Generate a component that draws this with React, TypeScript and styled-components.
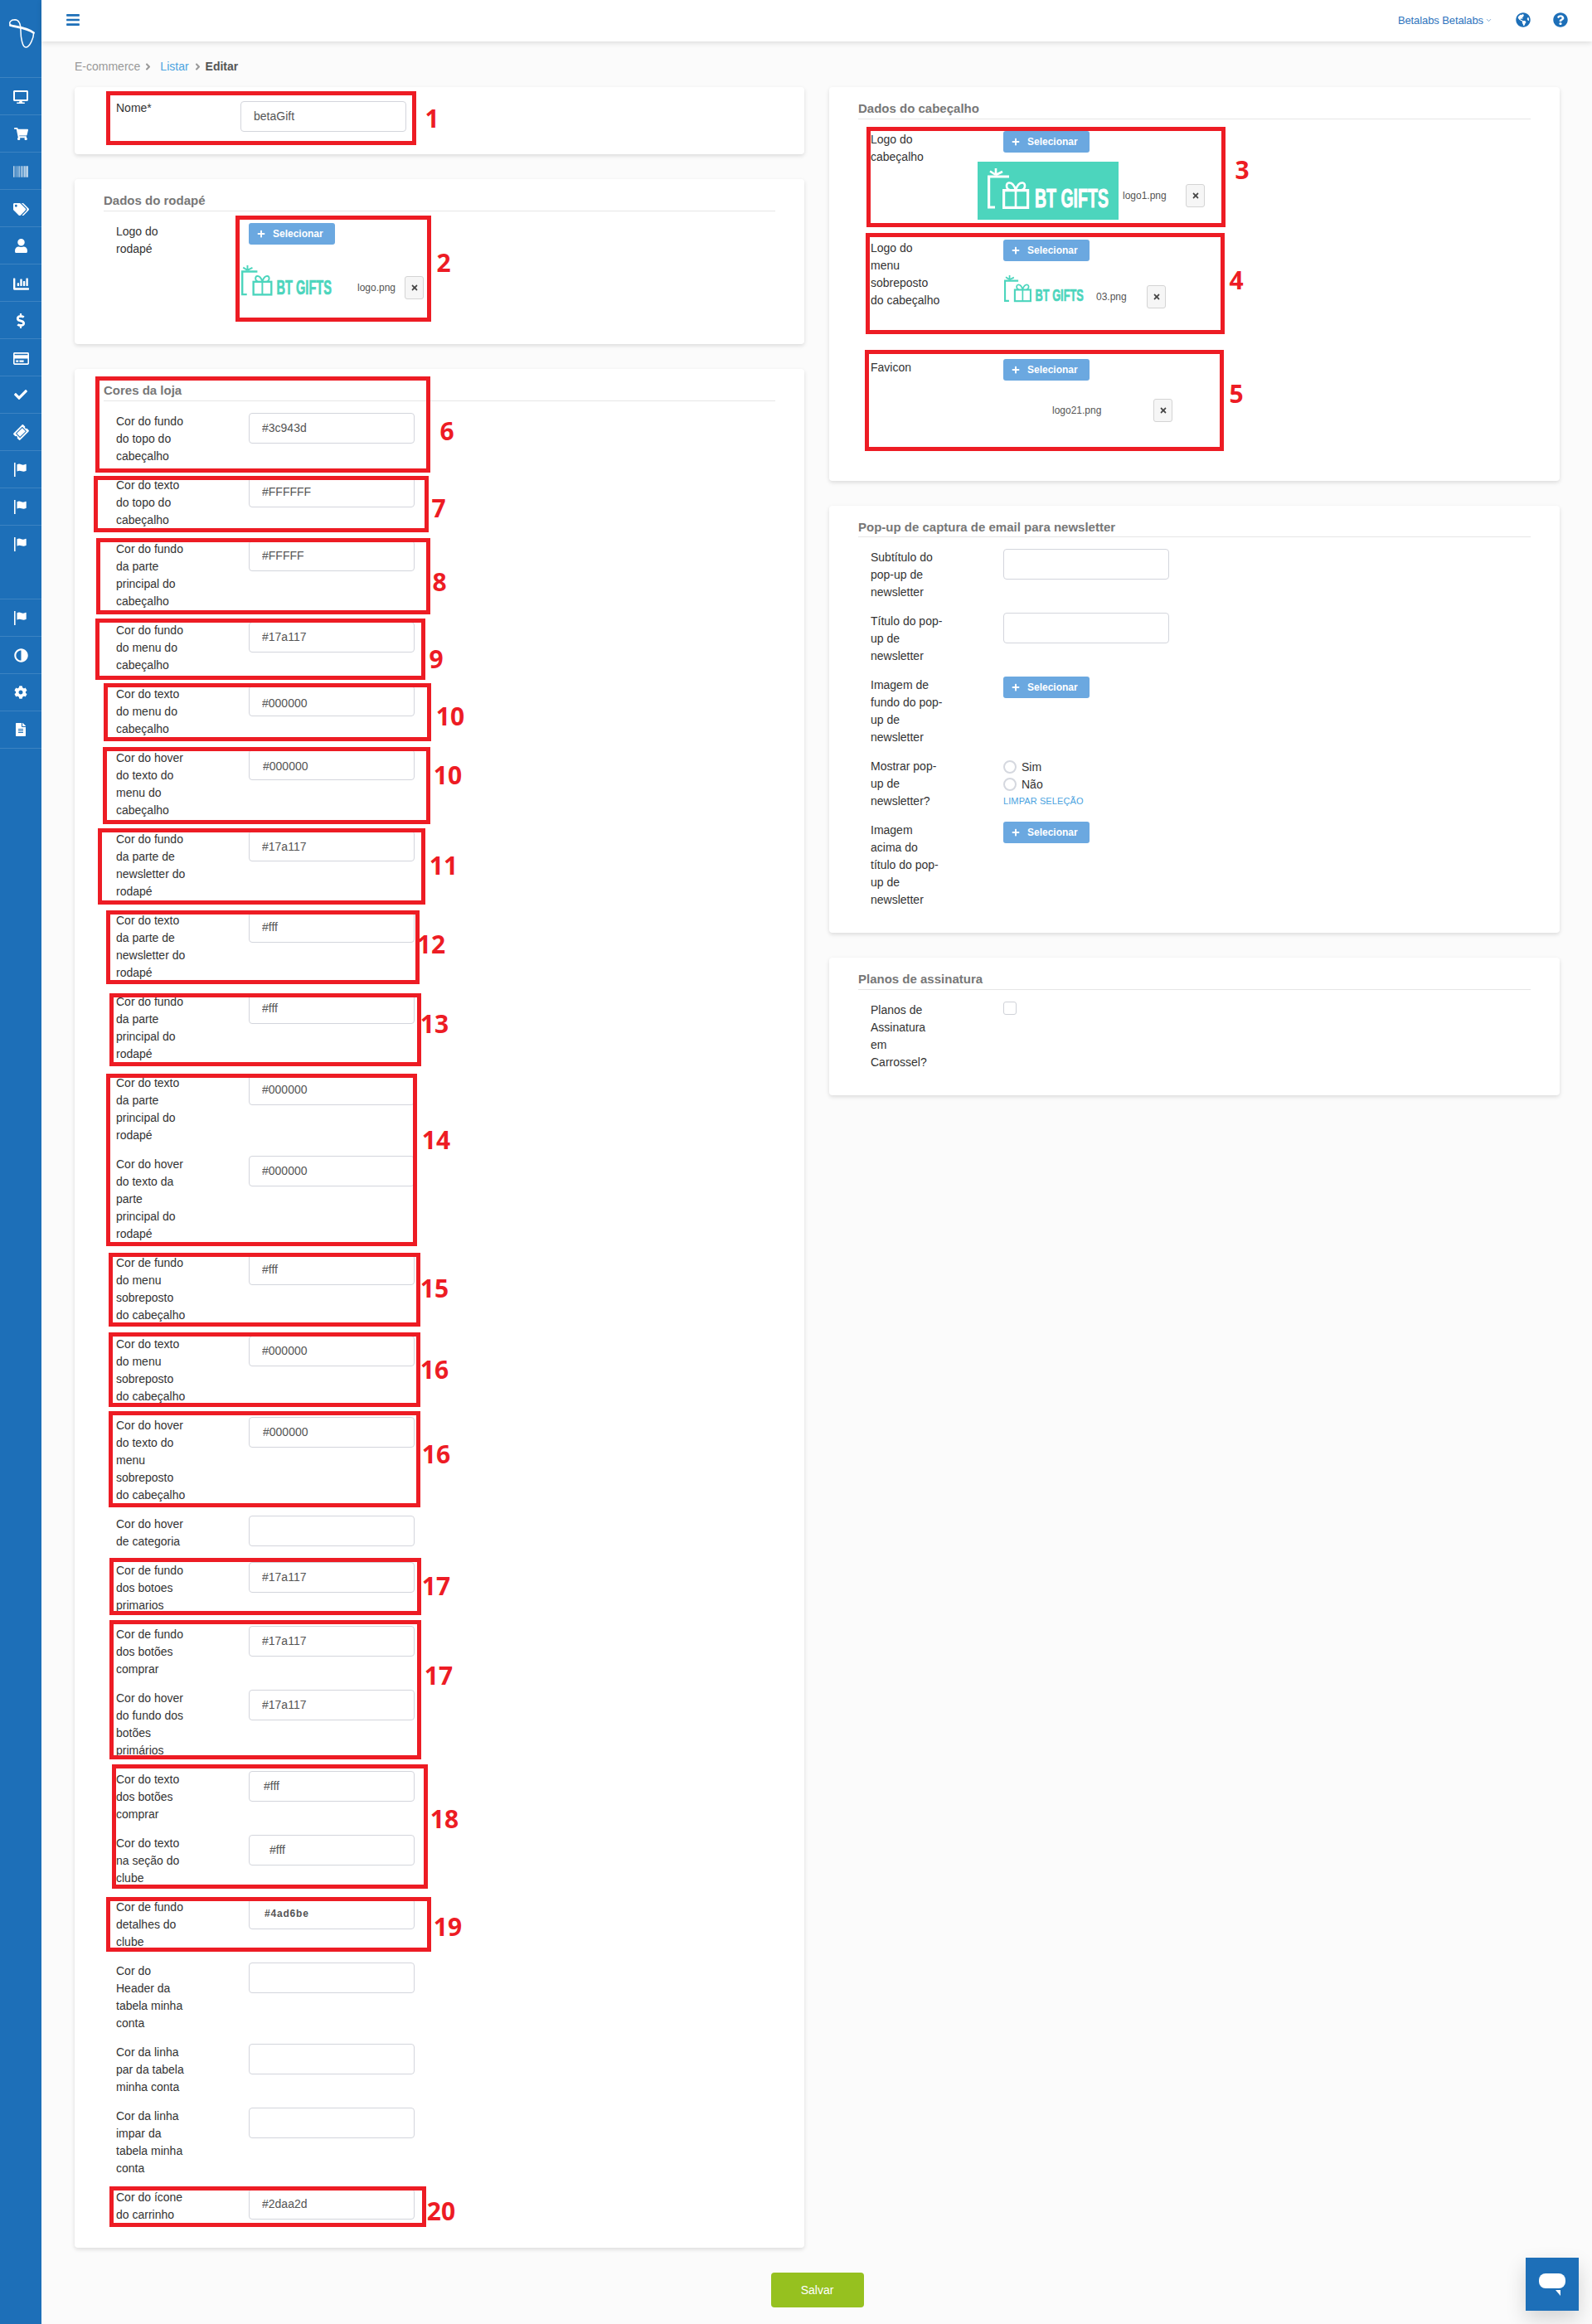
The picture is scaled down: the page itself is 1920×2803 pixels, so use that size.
import React from 'react';
import styled, { createGlobalStyle } from 'styled-components';
import {
  FaDesktop, FaShoppingCart, FaBarcode, FaTags, FaUser, FaChartBar, FaDollarSign,
  FaRegCreditCard, FaCheck, FaTicketAlt, FaAdjust, FaCog, FaFileAlt, FaBars,
  FaGlobeAmericas, FaQuestionCircle, FaPlus, FaTimes, FaAngleRight,
} from 'react-icons/fa';
import { ChevronDown } from 'lucide-react';

const BLUE = '#1d6fb8';

const Global = createGlobalStyle`
  html, body { margin: 0; padding: 0; background: #fbfbfb; }
  body { font-family: "Liberation Sans", Arial, sans-serif; font-size: 14px; color: #333; }
  * { box-sizing: border-box; }
`;

const Page = styled.div`
  position: relative;
  display: flex;
  width: 1920px;
  min-height: 2803px;
  overflow: hidden;
`;

const Sidebar = styled.aside`
  width: 50px;
  flex: none;
  background: ${BLUE};
  color: #fff;
`;

const SideLogo = styled.div`
  height: 94px;
  padding: 23px 0 0 10px;
  border-bottom: 1px solid rgba(255, 255, 255, 0.14);
  svg { display: block; }
`;

const SideItem = styled.div<{ $tall?: boolean }>`
  height: ${(p) => (p.$tall ? 89 : 45)}px;
  padding-top: 14px;
  display: flex;
  justify-content: center;
  align-items: flex-start;
  border-bottom: 1px solid rgba(255, 255, 255, 0.14);
  svg { display: block; }
`;

const FlippedAdjust = styled(FaAdjust)`
  transform: scaleX(-1);
`;

const TiltedTicket = styled(FaTicketAlt)`
  transform: rotate(-45deg);
`;

const Main = styled.div`
  flex: 1;
  min-width: 0;
  display: flex;
  flex-direction: column;
`;

const Topbar = styled.header`
  height: 50px;
  background: #fff;
  box-shadow: 0 2px 6px rgba(0, 0, 0, 0.12);
  display: flex;
  align-items: center;
  padding: 0 29px 2px 29px;
  color: ${BLUE};
`;

const UserMenu = styled.div`
  margin-left: auto;
  display: flex;
  align-items: center;
  font-size: 13px;
  color: #2f74bd;
  letter-spacing: -0.1px;
  svg { margin-left: 2px; color: #5b8fc7; }
`;

const TopIcon = styled.span<{ $gap: number }>`
  display: flex;
  margin-left: ${(p) => p.$gap}px;
  color: ${BLUE};
`;

const Content = styled.main`
  padding: 20px 39px 20px 40px;
  display: flex;
  flex-direction: column;
`;

const Crumbs = styled.nav`
  height: 20px;
  margin-bottom: 15px;
  display: flex;
  align-items: center;
  font-size: 14px;
  line-height: 20px;
  color: #999;
`;

const CrumbSep = styled.span<{ $l: number; $r: number }>`
  display: flex;
  margin: 0 ${(p) => p.$r}px 0 ${(p) => p.$l}px;
  color: #999;
`;

const CrumbLink = styled.span`
  color: #4ba3e0;
`;

const CrumbCurrent = styled.b`
  color: #555;
`;

const Columns = styled.div`
  display: grid;
  grid-template-columns: 880px 881px;
  column-gap: 30px;
  align-items: start;
`;

const Column = styled.div`
  display: flex;
  flex-direction: column;
  gap: 30px;
`;

const Card = styled.section<{ $bare?: boolean }>`
  background: #fff;
  border-radius: 4px;
  box-shadow: 0 2px 5px rgba(0, 0, 0, 0.13);
  padding: ${(p) => (p.$bare ? '15px 35px 13px' : '0 35px 15px')};
`;

const CardTitle = styled.h3<{ $tight?: boolean }>`
  margin: 0 0 14px;
  padding: 17px 0 ${(p) => (p.$tight ? 2 : 3)}px;
  font-size: 15px;
  line-height: 18px;
  font-weight: bold;
  color: #777;
  border-bottom: 1px solid #e6e6e6;
`;

const Row = styled.div<{ $labelWidth?: number; $minHeight?: number }>`
  display: grid;
  grid-template-columns: ${(p) => p.$labelWidth ?? 160}px 1fr;
  padding-left: 15px;
  margin-bottom: 14px;
  min-height: ${(p) => p.$minHeight ?? 0}px;
`;

const Label = styled.label`
  font-size: 14px;
  line-height: 21px;
  color: #333;
  white-space: pre-line;
`;

const TextInput = styled.input<{ $pad?: number; $strong?: boolean; $drop?: number; $top?: number }>`
  display: block;
  width: 200px;
  height: 37px;
  margin-top: ${(p) => p.$top ?? 0}px;
  border: 1px solid #d3d5dc;
  border-radius: 4px;
  background: #fff;
  color: #555;
  outline: none;
  font-family: "Liberation Sans", Arial, sans-serif;
  font-size: ${(p) => (p.$strong ? 12 : 14)}px;
  font-weight: ${(p) => (p.$strong ? 'bold' : 'normal')};
  letter-spacing: ${(p) => (p.$strong ? 0.8 : 0)}px;
  padding: ${(p) => (p.$drop ?? 0) * 2}px 0 1px ${(p) => p.$pad ?? 15}px;
`;

const SelectButton = styled.button`
  width: 104px;
  height: 26px;
  border: none;
  border-radius: 3px;
  background: #6ba8e0;
  color: #fff;
  font-family: "Liberation Sans", Arial, sans-serif;
  font-size: 12px;
  font-weight: bold;
  display: flex;
  align-items: center;
  padding: 0 0 0 10px;
  svg { margin-right: 9px; }
`;

const Preview = styled.div<{ $top: number; $shift?: number }>`
  display: flex;
  align-items: center;
  height: 28px;
  margin-top: ${(p) => p.$top}px;
  margin-left: ${(p) => p.$shift ?? 0}px;
`;

const LogoSlot = styled.div<{ $w: number; $h: number; $lift: number; $bg?: string; $inset?: number }>`
  flex: none;
  width: ${(p) => p.$w}px;
  height: ${(p) => p.$h}px;
  margin-bottom: ${(p) => p.$lift}px;
  padding-top: ${(p) => p.$inset ?? 0}px;
  background: ${(p) => p.$bg ?? 'transparent'};
  display: flex;
  align-items: flex-start;
  justify-content: center;
  svg { display: block; overflow: visible; }
`;

const FileName = styled.span<{ $l: number; $w: number }>`
  flex: none;
  width: ${(p) => p.$w}px;
  margin-left: ${(p) => p.$l}px;
  font-size: 12px;
  color: #555;
  white-space: nowrap;
`;

const RemoveButton = styled.button<{ $l: number }>`
  flex: none;
  width: 23px;
  height: 28px;
  padding: 0;
  margin-left: ${(p) => p.$l}px;
  border: 1px solid #d4d4d4;
  border-radius: 3px;
  background: #f6f6f6;
  color: #444;
  display: flex;
  align-items: center;
  justify-content: center;
`;

const RadioLine = styled.div`
  display: flex;
  align-items: center;
  height: 21px;
  font-size: 14px;
  color: #333;
`;

const RadioDot = styled.span`
  width: 16px;
  height: 16px;
  margin-right: 6px;
  border: 2px solid #d5d8df;
  border-radius: 50%;
  background: #fff;
`;

const ClearLink = styled.div`
  font-size: 11px;
  line-height: 21px;
  color: #4ba3e0;
  letter-spacing: 0.1px;
`;

const CheckBox = styled.span`
  display: block;
  width: 16px;
  height: 16px;
  border: 1px solid #cfd2d8;
  border-radius: 3px;
  background: #fff;
`;

const Footer = styled.div`
  display: flex;
  justify-content: center;
  margin-top: 30px;
`;

const SaveButton = styled.button`
  width: 112px;
  height: 42px;
  border: none;
  border-radius: 4px;
  background: #96c11f;
  color: #fff;
  font-family: "Liberation Sans", Arial, sans-serif;
  font-size: 14px;
`;

const ChatButton = styled.div`
  position: absolute;
  left: 1840px;
  top: 2723px;
  width: 64px;
  height: 64px;
  background: ${BLUE};
  box-shadow: 0 10px 24px rgba(0, 0, 0, 0.16);
  display: flex;
  align-items: center;
  justify-content: center;
`;

const Mark = styled.div<{ $x: number; $y: number; $r: number; $b: number }>`
  position: absolute;
  left: ${(p) => p.$x}px;
  top: ${(p) => p.$y}px;
  width: ${(p) => p.$r - p.$x}px;
  height: ${(p) => p.$b - p.$y}px;
  border: 5px solid #ed1c24;
  pointer-events: none;
`;

const MarkNumber = styled.span<{ $x: number; $y: number }>`
  position: absolute;
  left: ${(p) => p.$x}px;
  top: ${(p) => p.$y}px;
  transform: translate(-50%, -50%);
  font-family: "Open Sans", sans-serif;
  font-weight: 700;
  font-size: 30px;
  line-height: 1;
  color: #ed1c24;
`;

const FlagIcon = () => (
  <svg width="16" height="17" viewBox="0 0 16 17" fill="#fff">
    <rect x="0" y="0" width="1.6" height="17" />
    <path d="M3.5 2.2c2-1 3.6-.7 5.2 0s2.9.6 5.3-.4c.6 0 .7.3.7.6v7.4c-2.3 1.2-4 1.2-5.7.5s-3.300-.8-5.500.3V2.200z" />
  </svg>
);

const SideBrand = () => (
  <svg width="32" height="36" viewBox="0 0 32 36" fill="none" stroke="#fff" strokeLinecap="round">
    <path d="M2.500 7.500C8 9.500 22 10 30.500 16.500" strokeWidth="2.800" />
    <path
      d="M3 8C0 4 3 .8 8 .8 13 1 15 6 15 14c0 8 2 20 6 20 5 0 10-12 9.500-17.500"
      strokeWidth="1.500"
    />
  </svg>
);

const BrandLogo = ({ color, width }: { color: string; width: number }) => (
  <svg width={width} viewBox="0 0 146 49" fill="none" stroke={color} strokeWidth="3.200">
    <path d="M1.600 8.500V47H9M1.600 10H26" />
    <path d="M10 8 3 3.500M10 8V0M10 8l8-4" strokeWidth="2.600" />
    <rect x="19.600" y="26.600" width="29" height="20.800" />
    <path d="M34 26v22M34 26c-2-6-5-9-8.500-8.500-4 .6-3 8.500 1.500 8.500M34 26c2-6 5-9 8.500-8.500 4 .6 3 8.500-1.500 8.500" strokeWidth="2.600" />
    <text
      transform="translate(57 47) scale(0.63 1)"
      fontFamily="'Liberation Sans', sans-serif"
      fontWeight="bold"
      fontSize="31"
      fill={color}
      stroke={color}
      strokeWidth="1"
    >
      BT GIFTS
    </text>
  </svg>
);

const sideIcons: React.ReactNode[] = [
  <FaDesktop size={18} />, <FaShoppingCart size={17} />, <FaBarcode size={18} />, <FaTags size={19} />,
  <FaUser size={17} />, <FaChartBar size={19} />, <FaDollarSign size={18} />, <FaRegCreditCard size={19} />,
  <FaCheck size={16} />, <TiltedTicket size={17} />,
  <FlagIcon />, <FlagIcon />,
];

const sideIconsAfter: React.ReactNode[] = [
  <FlagIcon />, <FlippedAdjust size={17} />, <FaCog size={16} />, <FaFileAlt size={16} />,
];

type Color = { label: string; value?: string; pad?: number; strong?: boolean; drop?: number };

const colors: Color[] = [
  { label: 'Cor do fundo\ndo topo do\ncabeçalho', value: '#3c943d' },
  { label: 'Cor do texto\ndo topo do\ncabeçalho', value: '#FFFFFF' },
  { label: 'Cor do fundo\nda parte\nprincipal do\ncabeçalho', value: '#FFFFF' },
  { label: 'Cor do fundo\ndo menu do\ncabeçalho', value: '#17a117' },
  { label: 'Cor do texto\ndo menu do\ncabeçalho', value: '#000000', drop: 3 },
  { label: 'Cor do hover\ndo texto do\nmenu do\ncabeçalho', value: '#000000', pad: 16, drop: 2 },
  { label: 'Cor do fundo\nda parte de\nnewsletter do\nrodapé', value: '#17a117', drop: 1 },
  { label: 'Cor do texto\nda parte de\nnewsletter do\nrodapé', value: '#fff' },
  { label: 'Cor do fundo\nda parte\nprincipal do\nrodapé', value: '#fff' },
  { label: 'Cor do texto\nda parte\nprincipal do\nrodapé', value: '#000000' },
  { label: 'Cor do hover\ndo texto da\nparte\nprincipal do\nrodapé', value: '#000000' },
  { label: 'Cor de fundo\ndo menu\nsobreposto\ndo cabeçalho', value: '#fff' },
  { label: 'Cor do texto\ndo menu\nsobreposto\ndo cabeçalho', value: '#000000' },
  { label: 'Cor do hover\ndo texto do\nmenu\nsobreposto\ndo cabeçalho', value: '#000000', pad: 16 },
  { label: 'Cor do hover\nde categoria' },
  { label: 'Cor de fundo\ndos botoes\nprimarios', value: '#17a117' },
  { label: 'Cor de fundo\ndos botões\ncomprar', value: '#17a117' },
  { label: 'Cor do hover\ndo fundo dos\nbotões\nprimários', value: '#17a117' },
  { label: 'Cor do texto\ndos botões\ncomprar', value: '#fff', pad: 17 },
  { label: 'Cor do texto\nna seção do\nclube', value: '#fff', pad: 24 },
  { label: 'Cor de fundo\ndetalhes do\nclube', value: '#4ad6be', pad: 18, strong: true },
  { label: 'Cor do\nHeader da\ntabela minha\nconta' },
  { label: 'Cor da linha\npar da tabela\nminha conta' },
  { label: 'Cor da linha\nimpar da\ntabela minha\nconta' },
  { label: 'Cor do ícone\ndo carrinho', value: '#2daa2d', pad: 15 },
];

const marks: { n: string; x: number; y: number; r: number; b: number; nx: number; ny: number }[] = [
  { n: '1', x: 128, y: 110, r: 502, b: 175, nx: 521, ny: 143 },
  { n: '2', x: 284, y: 260, r: 520, b: 388, nx: 535, ny: 317 },
  { n: '3', x: 1045, y: 153, r: 1478, b: 274, nx: 1498, ny: 205 },
  { n: '4', x: 1044, y: 281, r: 1477, b: 403, nx: 1491, ny: 338 },
  { n: '5', x: 1043, y: 422, r: 1476, b: 544, nx: 1491, ny: 475 },
  { n: '6', x: 115, y: 454, r: 519, b: 570, nx: 539, ny: 520 },
  { n: '7', x: 113, y: 574, r: 517, b: 642, nx: 529, ny: 613 },
  { n: '8', x: 116, y: 649, r: 519, b: 741, nx: 530, ny: 702 },
  { n: '9', x: 115, y: 746, r: 513, b: 820, nx: 526, ny: 795 },
  { n: '10', x: 125, y: 824, r: 520, b: 894, nx: 543, ny: 864 },
  { n: '10', x: 124, y: 901, r: 519, b: 994, nx: 540, ny: 935 },
  { n: '11', x: 118, y: 999, r: 513, b: 1091, nx: 535, ny: 1044 },
  { n: '12', x: 128, y: 1098, r: 506, b: 1187, nx: 520, ny: 1139 },
  { n: '13', x: 132, y: 1198, r: 508, b: 1286, nx: 524, ny: 1235 },
  { n: '14', x: 128, y: 1295, r: 503, b: 1503, nx: 526, ny: 1375 },
  { n: '15', x: 131, y: 1511, r: 507, b: 1600, nx: 524, ny: 1554 },
  { n: '16', x: 131, y: 1607, r: 507, b: 1697, nx: 524, ny: 1652 },
  { n: '16', x: 131, y: 1702, r: 507, b: 1818, nx: 526, ny: 1754 },
  { n: '17', x: 132, y: 1879, r: 508, b: 1948, nx: 526, ny: 1913 },
  { n: '17', x: 132, y: 1954, r: 508, b: 2122, nx: 529, ny: 2021 },
  { n: '18', x: 135, y: 2128, r: 516, b: 2278, nx: 536, ny: 2194 },
  { n: '19', x: 128, y: 2288, r: 520, b: 2354, nx: 540, ny: 2324 },
  { n: '20', x: 132, y: 2637, r: 514, b: 2686, nx: 532, ny: 2667 },
];

const Select = () => (
  <SelectButton type="button">
    <FaPlus size={10} />
    Selecionar
  </SelectButton>
);

const Remove = ({ gap }: { gap: number }) => (
  <RemoveButton type="button" $l={gap}>
    <FaTimes size={10} />
  </RemoveButton>
);

export default function App() {
  return (
    <Page>
      <Global />
      <Sidebar>
        <SideLogo><SideBrand /></SideLogo>
        {sideIcons.map((icon, i) => <SideItem key={i}>{icon}</SideItem>)}
        <SideItem $tall><FlagIcon /></SideItem>
        {sideIconsAfter.map((icon, i) => <SideItem key={i}>{icon}</SideItem>)}
      </Sidebar>
      <Main>
        <Topbar>
          <FaBars size={18} />
          <UserMenu>
            Betalabs Betalabs
            <ChevronDown size={9} strokeWidth={2} />
          </UserMenu>
          <TopIcon $gap={28}><FaGlobeAmericas size={18} /></TopIcon>
          <TopIcon $gap={27}><FaQuestionCircle size={18} /></TopIcon>
        </Topbar>
        <Content>
          <Crumbs>
            E-commerce
            <CrumbSep $l={3} $r={8}><FaAngleRight size={13} /></CrumbSep>
            <CrumbLink>Listar</CrumbLink>
            <CrumbSep $l={4} $r={3}><FaAngleRight size={13} /></CrumbSep>
            <CrumbCurrent>Editar</CrumbCurrent>
          </Crumbs>
          <Columns>
            <Column>
              <Card $bare>
                <Row $labelWidth={150}>
                  <Label>Nome*</Label>
                  <TextInput readOnly value="betaGift" $top={2} />
                </Row>
              </Card>
              <Card>
                <CardTitle>Dados do rodapé</CardTitle>
                <Row $minHeight={117}>
                  <Label>{'Logo do\nrodapé'}</Label>
                  <div>
                    <Select />
                    <Preview $top={38} $shift={-9}>
                      <LogoSlot $w={109} $h={36} $lift={18}><BrandLogo color="#4cd5bd" width={109} /></LogoSlot>
                      <FileName $l={31} $w={46}>logo.png</FileName>
                      <Remove gap={11} />
                    </Preview>
                  </div>
                </Row>
              </Card>
              <Card>
                <CardTitle>Cores da loja</CardTitle>
                {colors.map((c, i) => (
                  <Row key={i}>
                    <Label>{c.label}</Label>
                    <TextInput readOnly value={c.value ?? ''} $pad={c.pad} $strong={c.strong} $drop={c.drop} />
                  </Row>
                ))}
              </Card>
            </Column>
            <Column>
              <Card>
                <CardTitle>Dados do cabeçalho</CardTitle>
                <Row $minHeight={117}>
                  <Label>{'Logo do\ncabeçalho'}</Label>
                  <div>
                    <Select />
                    <Preview $top={38} $shift={-31}>
                      <LogoSlot $w={170} $h={70} $lift={12} $bg="#4cd5bd" $inset={8}><BrandLogo color="#fff" width={146} /></LogoSlot>
                      <FileName $l={5} $w={52}>logo1.png</FileName>
                      <Remove gap={24} />
                    </Preview>
                  </div>
                </Row>
                <Row $minHeight={130}>
                  <Label>{'Logo do\nmenu\nsobreposto\ndo cabeçalho'}</Label>
                  <div>
                    <Select />
                    <Preview $top={29} $shift={1}>
                      <LogoSlot $w={96} $h={31} $lift={21}><BrandLogo color="#4cd5bd" width={96} /></LogoSlot>
                      <FileName $l={15} $w={38}>03.png</FileName>
                      <Remove gap={23} />
                    </Preview>
                  </div>
                </Row>
                <Row $minHeight={118}>
                  <Label>Favicon</Label>
                  <div>
                    <Select />
                    <Preview $top={22} $shift={59}>
                      <FileName $l={0} $w={60}>logo21.png</FileName>
                      <Remove gap={62} />
                    </Preview>
                  </div>
                </Row>
              </Card>
              <Card>
                <CardTitle $tight>Pop-up de captura de email para newsletter</CardTitle>
                <Row>
                  <Label>{'Subtítulo do\npop-up de\nnewsletter'}</Label>
                  <TextInput readOnly value="" />
                </Row>
                <Row>
                  <Label>{'Título do pop-\nup de\nnewsletter'}</Label>
                  <TextInput readOnly value="" />
                </Row>
                <Row>
                  <Label>{'Imagem de\nfundo do pop-\nup de\nnewsletter'}</Label>
                  <div><Select /></div>
                </Row>
                <Row>
                  <Label>{'Mostrar pop-\nup de\nnewsletter?'}</Label>
                  <div>
                    <RadioLine><RadioDot />Sim</RadioLine>
                    <RadioLine><RadioDot />Não</RadioLine>
                    <ClearLink>LIMPAR SELEÇÃO</ClearLink>
                  </div>
                </Row>
                <Row>
                  <Label>{'Imagem\nacima do\ntítulo do pop-\nup de\nnewsletter'}</Label>
                  <div><Select /></div>
                </Row>
              </Card>
              <Card>
                <CardTitle>Planos de assinatura</CardTitle>
                <Row>
                  <Label>{'Planos de\nAssinatura\nem\nCarrossel?'}</Label>
                  <div><CheckBox /></div>
                </Row>
              </Card>
            </Column>
          </Columns>
          <Footer>
            <SaveButton type="button">Salvar</SaveButton>
          </Footer>
        </Content>
      </Main>
      <ChatButton>
        <svg width="32" height="27" viewBox="0 0 32 27" fill="#fff">
          <rect x="0" y="0" width="32" height="18" rx="8" />
          <path d="M20 20h6v7z" />
        </svg>
      </ChatButton>
      {marks.map((m, i) => (
        <React.Fragment key={i}>
          <Mark $x={m.x} $y={m.y} $r={m.r} $b={m.b} />
          <MarkNumber $x={m.nx} $y={m.ny}>{m.n}</MarkNumber>
        </React.Fragment>
      ))}
    </Page>
  );
}
